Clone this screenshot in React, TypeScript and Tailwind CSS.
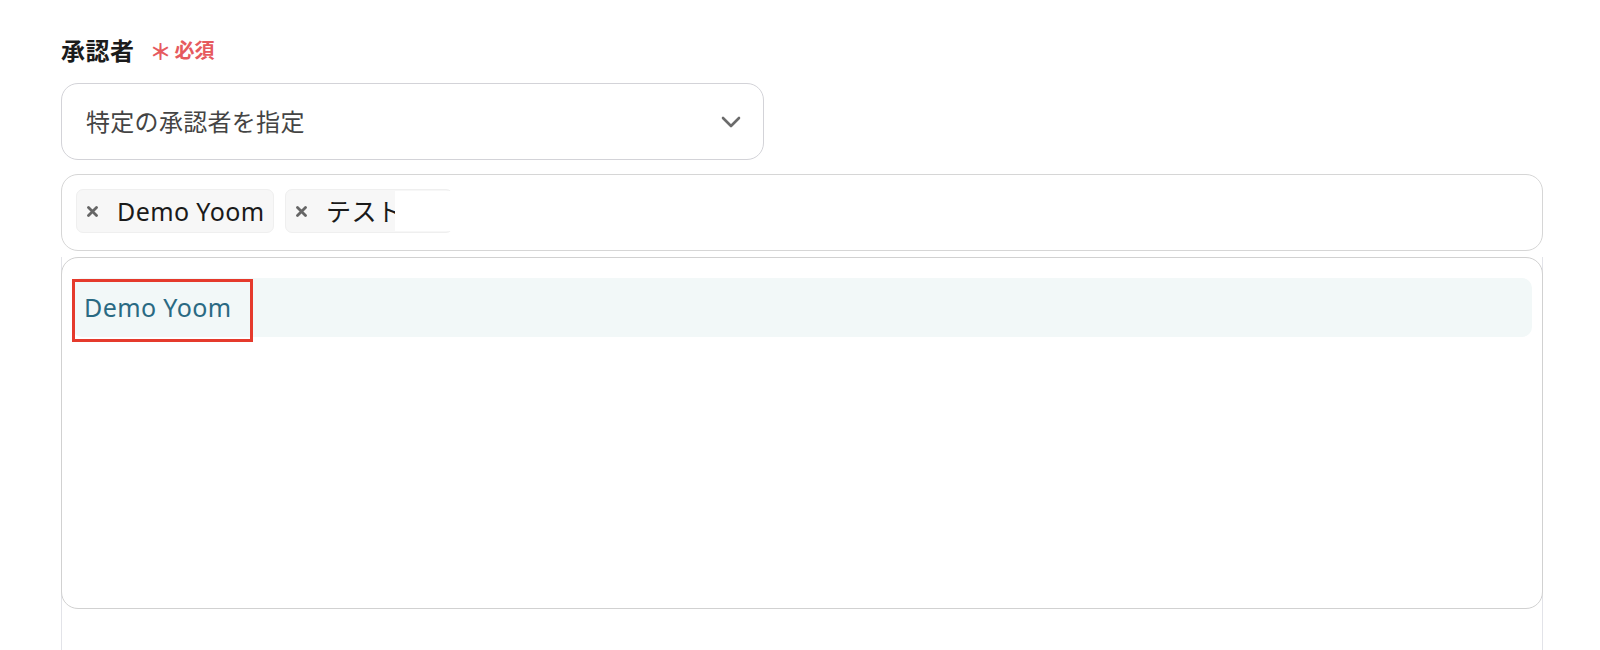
import { ReactNode } from "react";

const font = {
  fontFamily: '"Noto Sans", "Noto Sans CJK JP", sans-serif',
};

function RemoveIcon() {
  return (
    <svg width="11" height="11" viewBox="0 0 11 11" className="shrink-0">
      <path
        d="M1.5 1.5 L9.5 9.5 M9.5 1.5 L1.5 9.5"
        stroke="#666666"
        strokeWidth="2.8"
        strokeLinecap="round"
      />
    </svg>
  );
}

function Chevron() {
  return (
    <svg width="20" height="12" viewBox="0 0 20 12" className="shrink-0">
      <path
        d="M2 2 L10 10 L18 2"
        fill="none"
        stroke="#6b6b6b"
        strokeWidth="2.6"
        strokeLinecap="round"
        strokeLinejoin="round"
      />
    </svg>
  );
}

function Chip({ children, className = "" }: { children: ReactNode; className?: string }) {
  return (
    <div
      className={`flex h-[44px] shrink-0 items-center gap-[19px] overflow-hidden rounded-[7px] border border-[#efefef] bg-[#f7f7f7] pl-[10px] ${className}`}
    >
      <RemoveIcon />
      <span className="whitespace-nowrap text-[25px] leading-none tracking-[0.4px] text-[#1a1a1a]">
        {children}
      </span>
    </div>
  );
}

export default function App() {
  return (
    <div className="min-h-[650px] bg-white" style={font}>
      <div className="ml-[61px] w-[1482px] pt-[35px]">
        <div className="flex h-[32px] items-center">
          <span className="text-[24px] tracking-[0.5px] font-bold text-[#1b1b1b]">承認者</span>
          <span className="ml-[15px] flex items-center text-[20px] font-bold text-[#e65a5e]">
            <span className="mr-[3px] text-[22px] leading-none">＊</span>
            必須
          </span>
        </div>

        <div className="mt-[16px] flex h-[77px] w-[703px] items-center justify-between rounded-[17px] border border-[#d3d3d8] pl-[24px] pr-[22px]">
          <span className="text-[24px] tracking-[0.3px] text-[#444444]">特定の承認者を指定</span>
          <Chevron />
        </div>

        <div className="mt-[14px] flex h-[77px] items-start gap-[11px] rounded-[17px] border border-[#d6d6d6] pl-[14px] pt-[14px]">
          <Chip className="w-[198px]">Demo Yoom</Chip>
          <div className="relative">
            <Chip className="w-[168px] gap-[18px]">テスト</Chip>
            <div className="absolute left-[110px] top-[2px] h-[40px] w-[58px] bg-white" />
          </div>
        </div>

        <div className="relative mt-[6px] h-[400px] border-x border-[#e2e3e8]">
          <div className="absolute inset-x-[-1px] top-0 h-[352px] rounded-[17px] border border-[#d1d1d1] bg-white px-[10px] pt-[20px]">
            <div className="flex h-[59px] items-center rounded-[10px] bg-[#f2f8f8] pl-[12px]">
              <span className="text-[25px] tracking-[0.4px] text-[#2a6a83]">Demo Yoom</span>
            </div>
            <div className="absolute left-[10px] top-[21px] h-[63px] w-[181px] border-[3px] border-[#e53a2c]" />
          </div>
        </div>
      </div>
    </div>
  );
}
